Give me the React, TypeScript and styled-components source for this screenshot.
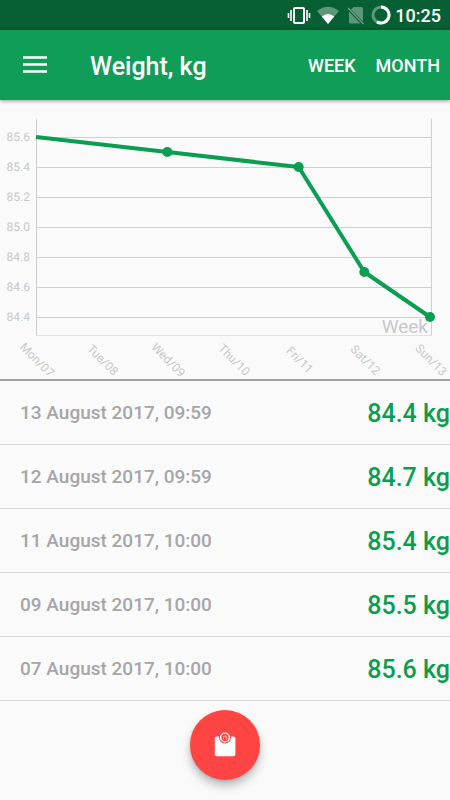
import React from "react";
import styled, { createGlobalStyle } from "styled-components";

const GlobalStyle = createGlobalStyle`
  *, *::before, *::after { box-sizing: border-box; }
  body {
    margin: 0;
    background: #fafafa;
    font-family: Roboto, "Liberation Sans", sans-serif;
  }
`;

const Page = styled.div`
  min-height: 100vh;
  padding-bottom: 99px;
  overflow-x: hidden;
`;

const StatusBar = styled.div`
  display: flex;
  align-items: center;
  justify-content: flex-end;
  gap: 4px;
  height: 30px;
  padding-right: 9px;
  background: linear-gradient(#075f34 28px, #06542e);
  color: #fff;
`;

const StatusGroup = styled.div`
  display: flex;
  gap: 6px;
`;

const Icon = styled.svg`
  display: block;
  flex: none;
`;

const Clock = styled.time`
  padding-top: 2px;
  font-size: 18px;
  font-weight: 500;
  line-height: 28px;
`;

const AppBar = styled.header`
  position: relative;
  display: flex;
  align-items: center;
  height: 70px;
  padding: 2px 10px 0 20px;
  background: #0f9d58;
  color: #fff;
  box-shadow: 0 1px 4px rgba(0, 0, 0, 0.4);
`;

const BarButton = styled.button`
  padding: 0;
  border: 0;
  background: none;
  color: inherit;
  font: 500 18px/30px Roboto, "Liberation Sans", sans-serif;
  cursor: pointer;
`;

const MenuButton = styled(BarButton)`
  width: 30px;
  height: 30px;
  margin-right: 40px;
`;

const Title = styled.h1`
  flex: 1;
  margin: 0;
  padding-top: 2px;
  font-size: 25px;
  font-weight: 500;
  line-height: 30px;
`;

const RangeNav = styled.nav`
  display: flex;
  gap: 20px;
`;

const ChartPanel = styled.section`
  border-bottom: 2px solid #a0a0a0;
`;

const ChartSvg = styled.svg`
  display: block;
  width: 100%;
  height: auto;
  overflow: visible;
`;

const GridLine = styled.line<{ $light?: boolean }>`
  stroke: ${(p) => (p.$light ? "#e0e0e0" : "#d0d0d0")};
  stroke-width: 1;
`;

const AxisLabel = styled.text`
  fill: #c8c8c8;
  font-size: 12px;
  text-rendering: geometricPrecision;
`;

const RangeLabel = styled.text`
  fill: #c8c8c8;
  font-size: 19px;
`;

const Series = styled.polyline`
  fill: none;
  stroke: #0a9e52;
  stroke-width: 4;
  stroke-linejoin: round;
`;

const Marker = styled.circle`
  fill: #0a9e52;
`;

const List = styled.ul`
  margin: 0;
  padding: 0;
  list-style: none;
`;

const Row = styled.li`
  display: flex;
  align-items: center;
  justify-content: space-between;
  height: 64px;
  padding-left: 20px;
  border-bottom: 1px solid #d4d4d4;
`;

const RowDate = styled.time`
  color: #a6a6a6;
  font-size: 19px;
  font-weight: 500;
`;

const RowWeight = styled.span`
  padding-top: 2px;
  color: #0a9e52;
  font-size: 25px;
  font-weight: 500;
`;

const AddButton = styled.button`
  position: fixed;
  bottom: 20px;
  left: 50%;
  display: flex;
  align-items: center;
  justify-content: center;
  width: 70px;
  height: 70px;
  margin-left: -35px;
  padding: 0;
  border: 0;
  border-radius: 50%;
  background: #ff4444;
  box-shadow: 0 6px 10px rgba(0, 0, 0, 0.25), 0 1px 3px rgba(0, 0, 0, 0.15);
  cursor: pointer;
`;

const days = ["Mon/07", "Tue/08", "Wed/09", "Thu/10", "Fri/11", "Sat/12", "Sun/13"];
const ticks = [85.6, 85.4, 85.2, 85.0, 84.8, 84.6, 84.4];
const samples = [
  { day: 0, kg: 85.6 },
  { day: 2, kg: 85.5 },
  { day: 4, kg: 85.4 },
  { day: 5, kg: 84.7 },
  { day: 6, kg: 84.4 },
];
const entries = [
  { at: "2017-08-13T09:59", label: "13 August 2017, 09:59", kg: 84.4 },
  { at: "2017-08-12T09:59", label: "12 August 2017, 09:59", kg: 84.7 },
  { at: "2017-08-11T10:00", label: "11 August 2017, 10:00", kg: 85.4 },
  { at: "2017-08-09T10:00", label: "09 August 2017, 10:00", kg: 85.5 },
  { at: "2017-08-07T10:00", label: "07 August 2017, 10:00", kg: 85.6 },
];

const xOf = (day: number) => 36 + (day * 394) / 6;
const yOf = (kg: number) => Math.round(37 + (85.6 - kg) * 150);

function StatusIcons() {
  return (
    <StatusGroup>
      <Icon width="24" height="20" viewBox="0 0 24 20" aria-label="Vibrate">
        <rect x="7" y="3" width="10" height="15" rx="1" fill="none" stroke="#fff" strokeWidth="2" />
        <path d="M4 5v11M20 5v11M1.500 8v5M22.500 8v5" stroke="#fff" strokeWidth="1.600" />
      </Icon>
      <Icon width="22" height="20" viewBox="0 0 22 20" aria-label="Wi-Fi">
        <path d="M0 6Q11-2.500 22 6L11 19Z" fill="#fff" opacity="0.350" />
        <path d="M4.800 11.500Q11 6.500 17.200 11.500L11 19Z" fill="#fff" />
      </Icon>
      <Icon width="20" height="20" viewBox="0 0 20 20" aria-label="No SIM">
        <path d="M6 4.500 8.500 2h8q1.500 0 1.500 1.500V16.500Z" fill="#fff" opacity="0.350" />
        <path d="M4 6.500 15.500 18.500H5.500Q4 18.500 4 17Z" fill="#fff" opacity="0.350" />
        <path d="M3 3 18.500 19" stroke="#fff" strokeWidth="1.400" opacity="0.400" />
      </Icon>
      <Icon width="20" height="20" viewBox="0 0 20 20" aria-label="Battery">
        <circle cx="10" cy="10" r="8" fill="none" stroke="#fff" strokeWidth="3" opacity="0.350" />
        <path d="M10 2A8 8 0 1 1 6 16.900" fill="none" stroke="#fff" strokeWidth="3" />
      </Icon>
    </StatusGroup>
  );
}

function WeightChart() {
  return (
    <ChartPanel aria-label="Weight chart">
      <ChartSvg viewBox="0 0 450 279" role="img" aria-label="Weight over the week">
        {ticks.map((kg) => (
          <g key={kg}>
            <GridLine x1="36" x2="432" y1={yOf(kg) + 0.5} y2={yOf(kg) + 0.5} />
            <AxisLabel x="30" y={yOf(kg) + 4} textAnchor="end">
              {kg.toFixed(1)}
            </AxisLabel>
          </g>
        ))}
        <GridLine x1="36.5" x2="36.5" y1="19" y2="236" />
        <GridLine x1="431.5" x2="431.5" y1="19" y2="236" />
        <GridLine $light x1="36" x2="432" y1="235.5" y2="235.5" />
        {days.map((day, i) => (
          <AxisLabel
            key={day}
            textAnchor="middle"
            dominantBaseline="central"
            transform={`translate(${xOf(i) + 1} 260) rotate(45)`}
          >
            {day}
          </AxisLabel>
        ))}
        <RangeLabel x="428" y="233" textAnchor="end">
          Week
        </RangeLabel>
        <Series points={samples.map((s) => `${xOf(s.day)},${yOf(s.kg)}`).join(" ")} />
        {samples.slice(1).map((s) => (
          <Marker key={s.day} cx={xOf(s.day)} cy={yOf(s.kg)} r="5" />
        ))}
      </ChartSvg>
    </ChartPanel>
  );
}

export default function App() {
  return (
    <Page>
      <GlobalStyle />
      <StatusBar>
        <StatusIcons />
        <Clock>10:25</Clock>
      </StatusBar>
      <AppBar>
        <MenuButton aria-label="Menu">
          <Icon width="30" height="30" viewBox="0 0 30 30">
            <path d="M3 6.500h24M3 13.500h24M3 20.500h24" stroke="#fff" strokeWidth="2.600" />
          </Icon>
        </MenuButton>
        <Title>Weight, kg</Title>
        <RangeNav>
          <BarButton>WEEK</BarButton>
          <BarButton>MONTH</BarButton>
        </RangeNav>
      </AppBar>
      <main>
        <WeightChart />
        <List>
          {entries.map((e) => (
            <Row key={e.at}>
              <RowDate dateTime={e.at}>{e.label}</RowDate>
              <RowWeight>{e.kg.toFixed(1)} kg</RowWeight>
            </Row>
          ))}
        </List>
      </main>
      <AddButton aria-label="Add weight">
        <Icon width="30" height="30" viewBox="0 0 30 30">
          <rect x="4.800" y="6.500" width="20.600" height="19.800" rx="2" fill="#fff" />
          <circle cx="15" cy="7.500" r="6" fill="#ff4444" />
          <circle cx="15" cy="7.500" r="4.400" fill="none" stroke="#fff" strokeWidth="1.400" />
          <path d="M13.400 9.500V7.500a1.600 1.600 0 0 1 3.200 0V9.500" fill="none" stroke="#fff" strokeWidth="0.900" opacity="0.700" />
        </Icon>
      </AddButton>
    </Page>
  );
}
